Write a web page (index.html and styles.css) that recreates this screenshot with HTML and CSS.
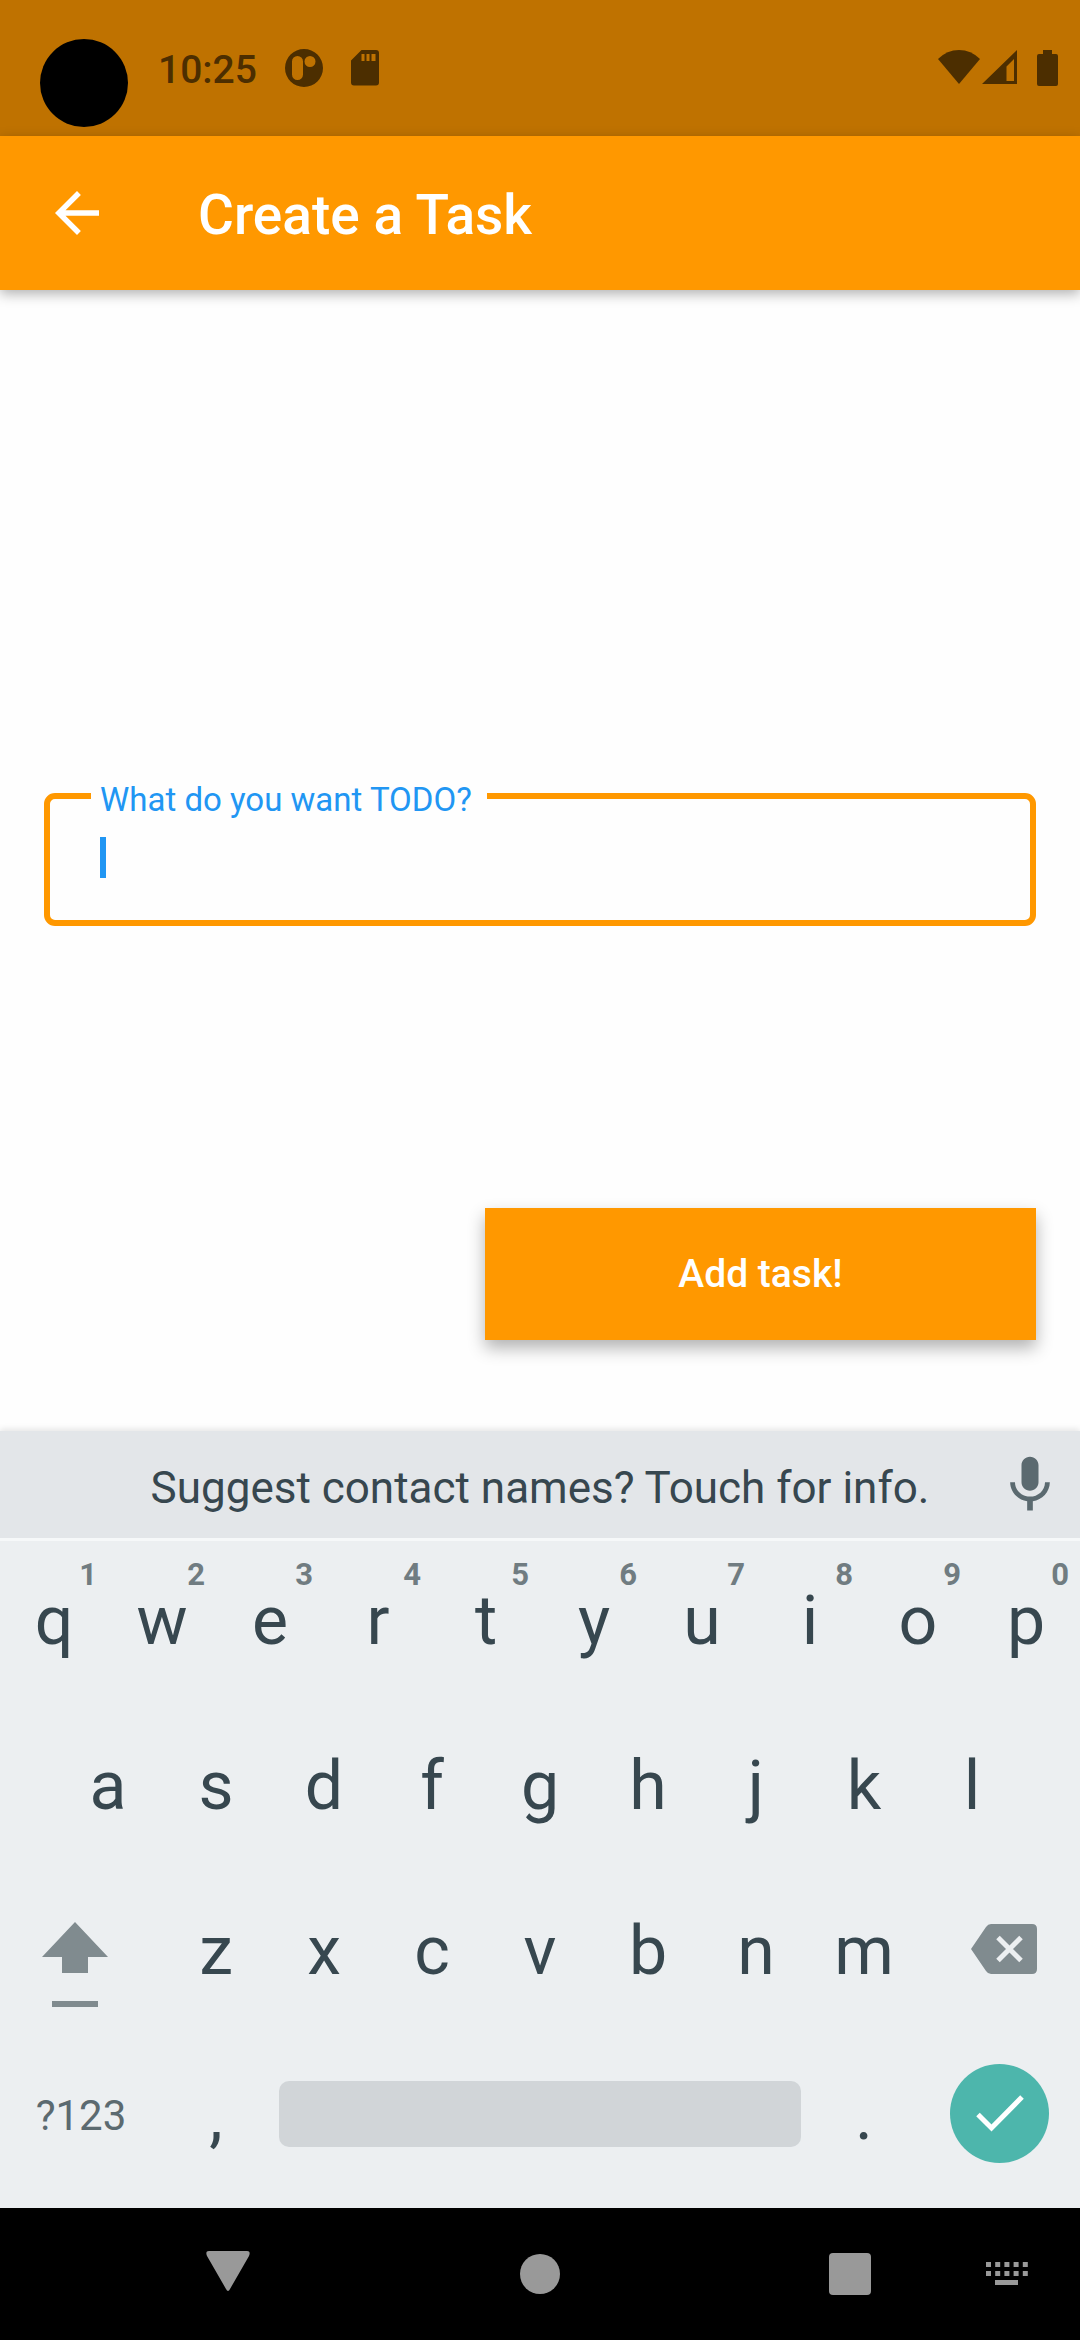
FILE: index.html
```html
<!DOCTYPE html>
<html lang="en">
<head>
<meta charset="utf-8">
<meta name="viewport" content="width=device-width, initial-scale=1">
<title>Create a Task</title>
<link rel="stylesheet" href="styles.css">
</head>
<body>
<div class="status-bar">
  <span class="camera"></span>
  <span class="clock">10:25</span>
  <svg class="status-p" width="38" height="38" viewBox="0 0 38 38"><path fill="currentColor" fill-rule="evenodd" d="M19 0a19 19 0 1 1 0 38a19 19 0 0 1 0-38zM12.500 7A5.500 5.500 0 0 0 7 12.500v13a5.500 5.500 0 0 0 11 0v-13A5.500 5.500 0 0 0 12.500 7zM25 7a5.500 5.500 0 1 0 0 11a5.500 5.500 0 0 0 0-11z"/></svg>
  <svg width="28" height="36" viewBox="0 0 28 36"><path fill="currentColor" fill-rule="evenodd" d="M10.500 0H25q3 0 3 3v29.500q0 3-3 3H3q-3 0-3-3v-22zM10.500 4v7h3V4zM15.500 4v7h3V4zM20.500 4v7h4V4z"/></svg>
  <span class="status-right">
    <svg width="42" height="34" viewBox="0 0 42 34"><path fill="currentColor" d="M21 34L0 9Q9 0 21 0T42 9z"/></svg>
    <svg width="35" height="34" viewBox="0 0 35 34"><path fill="currentColor" fill-rule="evenodd" d="M35 0v34H0zM32 9l-7.500 7.500V31H32z"/></svg>
    <svg class="battery" width="21" height="36" viewBox="0 0 21 36"><path fill="currentColor" d="M6 0h9v4h4q2 0 2 2v28q0 2-2 2H2q-2 0-2-2V6q0-2 2-2h4z"/></svg>
  </span>
</div>

<header class="app-bar">
  <button class="back" type="button" aria-label="Back">
    <svg width="66" height="66" viewBox="0 0 24 24"><path fill="currentColor" d="M20 11H7.830l5.590-5.590L12 4l-8 8 8 8 1.410-1.410L7.830 13H20v-2z"/></svg>
  </button>
  <h1>Create a Task</h1>
</header>

<main>
  <form class="task-form">
    <fieldset class="field">
      <legend><label for="todo">What do you want TODO?</label></legend>
      <div class="field-line">
        <span class="caret"></span>
        <input id="todo" type="text" autocomplete="off">
      </div>
    </fieldset>
    <div class="actions">
      <button class="add" type="submit">Add task!</button>
    </div>
  </form>
</main>

<section class="keyboard" aria-label="Keyboard">
  <div class="suggestions">
    <button class="suggestion" type="button">Suggest contact names? Touch for info.</button>
    <button class="mic" type="button" aria-label="Voice input">
      <svg width="68" height="68" viewBox="0 0 24 24"><path fill="currentColor" d="M12 14c1.660 0 3-1.340 3-3V5c0-1.660-1.340-3-3-3S9 3.340 9 5v6c0 1.660 1.340 3 3 3zm5.300-3c0 3-2.540 5.100-5.300 5.100S6.700 14 6.700 11H5c0 3.410 2.720 6.230 6 6.720V21h2v-3.280c3.280-.480 6-3.300 6-6.720h-1.700z"/></svg>
    </button>
  </div>
  <div class="keys">
    <div class="row row-top">
      <button type="button">q<small>1</small></button>
      <button type="button">w<small>2</small></button>
      <button type="button">e<small>3</small></button>
      <button type="button">r<small>4</small></button>
      <button type="button">t<small>5</small></button>
      <button type="button">y<small>6</small></button>
      <button type="button">u<small>7</small></button>
      <button type="button">i<small>8</small></button>
      <button type="button">o<small>9</small></button>
      <button type="button">p<small>0</small></button>
    </div>
    <div class="row row-home">
      <button type="button">a</button>
      <button type="button">s</button>
      <button type="button">d</button>
      <button type="button">f</button>
      <button type="button">g</button>
      <button type="button">h</button>
      <button type="button">j</button>
      <button type="button">k</button>
      <button type="button">l</button>
    </div>
    <div class="row row-shift">
      <button class="shift" type="button" aria-label="Shift">
        <svg width="66" height="136" viewBox="0 0 66 136"><path fill="currentColor" d="M33 41l33 35H46v16H20V76H0zM10 120h46v6H10z"/></svg>
      </button>
      <button type="button">z</button>
      <button type="button">x</button>
      <button type="button">c</button>
      <button type="button">v</button>
      <button type="button">b</button>
      <button type="button">n</button>
      <button type="button">m</button>
      <button class="delete" type="button" aria-label="Delete">
        <svg width="66" height="50" viewBox="0 0 66 50"><path fill="currentColor" d="M20 0h41q5 0 5 5v40q0 5-5 5H20q-3 0-5-3L0 25 15 3q2-3 5-3z"/><path fill="none" stroke="#eceff1" stroke-width="5" d="M27 13.500l23 23M50 13.500L27 36.500"/></svg>
      </button>
    </div>
    <div class="row row-space">
      <button class="symbols" type="button">?123</button>
      <button type="button">,</button>
      <button class="space" type="button" aria-label="Space"></button>
      <button type="button">.</button>
      <button class="done" type="button" aria-label="Done">
        <svg width="99" height="99" viewBox="0 0 99 99"><circle cx="49.500" cy="49.500" r="49.500" fill="#4db6ac"/><path fill="none" stroke="#fff" stroke-width="5" d="M28 50.500L41.500 64L72 33"/></svg>
      </button>
    </div>
  </div>
</section>

<nav class="nav-bar">
  <button type="button" aria-label="Hide keyboard"><svg width="44" height="46" viewBox="0 0 44 46"><path fill="currentColor" d="M3 0h38q4 0 2 5L24 38q-2 4-4 0L1 5q-2-5 2-5z"/></svg></button>
  <button class="home" type="button" aria-label="Home"><svg width="40" height="40" viewBox="0 0 40 40"><circle cx="20" cy="20" r="20" fill="currentColor"/></svg></button>
  <button class="overview" type="button" aria-label="Overview"><svg width="42" height="42" viewBox="0 0 42 42"><rect width="42" height="42" rx="4" fill="currentColor"/></svg></button>
  <button class="switcher" type="button" aria-label="Switch keyboard"><svg width="42" height="24" viewBox="0 0 42 24"><path fill="none" stroke="currentColor" stroke-width="5" stroke-dasharray="5 4.200" d="M0 2.500h42M0 11.500h42"/><path fill="currentColor" d="M9 18h23v5H9z"/></svg></button>
</nav>
</body>
</html>
```

FILE: styles.css
```css
* {
  box-sizing: border-box;
}

body {
  margin: 0;
  min-height: 100vh;
  display: flex;
  flex-direction: column;
  background: #fefefe;
  font-family: Roboto, "Noto Sans", sans-serif;
}

button {
  margin: 0;
  padding: 0;
  border: 0;
  background: none;
  color: inherit;
  font: inherit;
}

svg {
  display: block;
}

/* Status bar */
.status-bar {
  position: relative;
  display: flex;
  align-items: center;
  height: 136px;
  padding: 0 22px 0 158px;
  background: #bf7200;
  color: #4c2e00;
}

.camera {
  position: absolute;
  left: 40px;
  top: 39px;
  width: 88px;
  height: 88px;
  border-radius: 50%;
  background: #000;
}

.clock {
  padding-top: 3px;
  font-size: 39px;
  font-weight: 500;
}

.status-p {
  margin: 0 28px;
}

.status-right {
  display: flex;
  margin-left: auto;
  gap: 2px;
}

.battery {
  margin-left: 18px;
}

/* App bar */
.app-bar {
  position: relative;
  display: flex;
  align-items: center;
  gap: 44px;
  height: 154px;
  background: #ff9800;
  color: #fff;
  box-shadow: 0 4px 12px rgba(0, 0, 0, .3);
}

.back {
  display: grid;
  place-items: center;
  width: 154px;
  height: 154px;
}

h1 {
  margin: 0;
  padding-top: 3px;
  font-size: 55px;
  font-weight: 500;
}

/* Form */
main {
  flex: 1;
  display: flex;
}

.task-form {
  flex: 1;
  display: grid;
  grid-template-rows: 1fr auto 1fr;
  padding: 0 44px;
}

.field {
  grid-row: 2;
  min-width: 0;
  margin: 0 0 22px;
  padding: 0 50px;
  border: 6px solid #ff9800;
  border-radius: 11px;
}

legend {
  margin-left: -9px;
  padding: 7px 15px 0 9px;
  color: #2196f3;
  font-size: 33px;
  line-height: 38px;
}

.field-line {
  display: flex;
  padding: 18px 0 42px;
}

.caret {
  width: 6px;
  height: 41px;
  background: #2196f3;
}

input {
  flex: 1;
  min-width: 0;
  height: 41px;
  padding: 0;
  border: 0;
  outline: 0;
  background: none;
  font: 44px Roboto, sans-serif;
}

.actions {
  grid-row: 3;
  display: grid;
  grid-template-columns: 4fr 5fr;
  align-items: end;
  padding-bottom: 91px;
}

.add {
  grid-column: 2;
  height: 132px;
  background: #ff9800;
  color: #fff;
  font-size: 39px;
  font-weight: 500;
  box-shadow: 0 8px 16px rgba(0, 0, 0, .3);
}

/* Keyboard */
.keyboard {
  background: #eceff1;
  color: #37474f;
  box-shadow: 0 -2px 6px rgba(0, 0, 0, .1);
}

.suggestions {
  display: flex;
  height: 107px;
  padding-left: 100px;
  background: #e3e6e9;
}

.suggestion {
  flex: 1;
  padding-top: 6px;
  font-size: 44px;
  white-space: nowrap;
}

.mic {
  display: grid;
  place-items: center;
  width: 100px;
  color: #5b6a70;
}

.keys {
  padding-bottom: 10px;
  box-shadow: inset 0 3px #f6f8f9;
}

.row {
  display: grid;
  height: 165px;
  font-size: 68px;
}

.row-top {
  grid-template-columns: repeat(10, 1fr);
}

.row-top button {
  position: relative;
}

small {
  position: absolute;
  top: 18px;
  right: 11px;
  color: #707c81;
  font-size: 31px;
  font-weight: 700;
}

.row-home {
  grid-template-columns: repeat(9, 1fr);
  padding: 0 5%;
}

.row-shift {
  grid-template-columns: 3fr repeat(7, 2fr) 3fr;
}

.row-space {
  grid-template-columns: 3fr 2fr 10fr 2fr 3fr;
}

.shift,
.delete,
.done {
  display: grid;
  place-items: center;
  padding-bottom: 4px;
  color: #808b8f;
}

.shift {
  padding-right: 12px;
}

.delete {
  padding-left: 10px;
}

.symbols {
  color: #5b6a70;
  font-size: 42px;
}

.space {
  align-self: center;
  height: 66px;
  margin: 0 9px 4px;
  border-radius: 10px;
  background: #d1d5d8;
}

/* System navigation */
.nav-bar {
  display: flex;
  align-items: center;
  height: 132px;
  padding: 0 52px 0 206px;
  background: #000;
  color: #999;
}

.home,
.overview {
  margin-left: auto;
}

.switcher {
  margin-left: 115px;
}
```
